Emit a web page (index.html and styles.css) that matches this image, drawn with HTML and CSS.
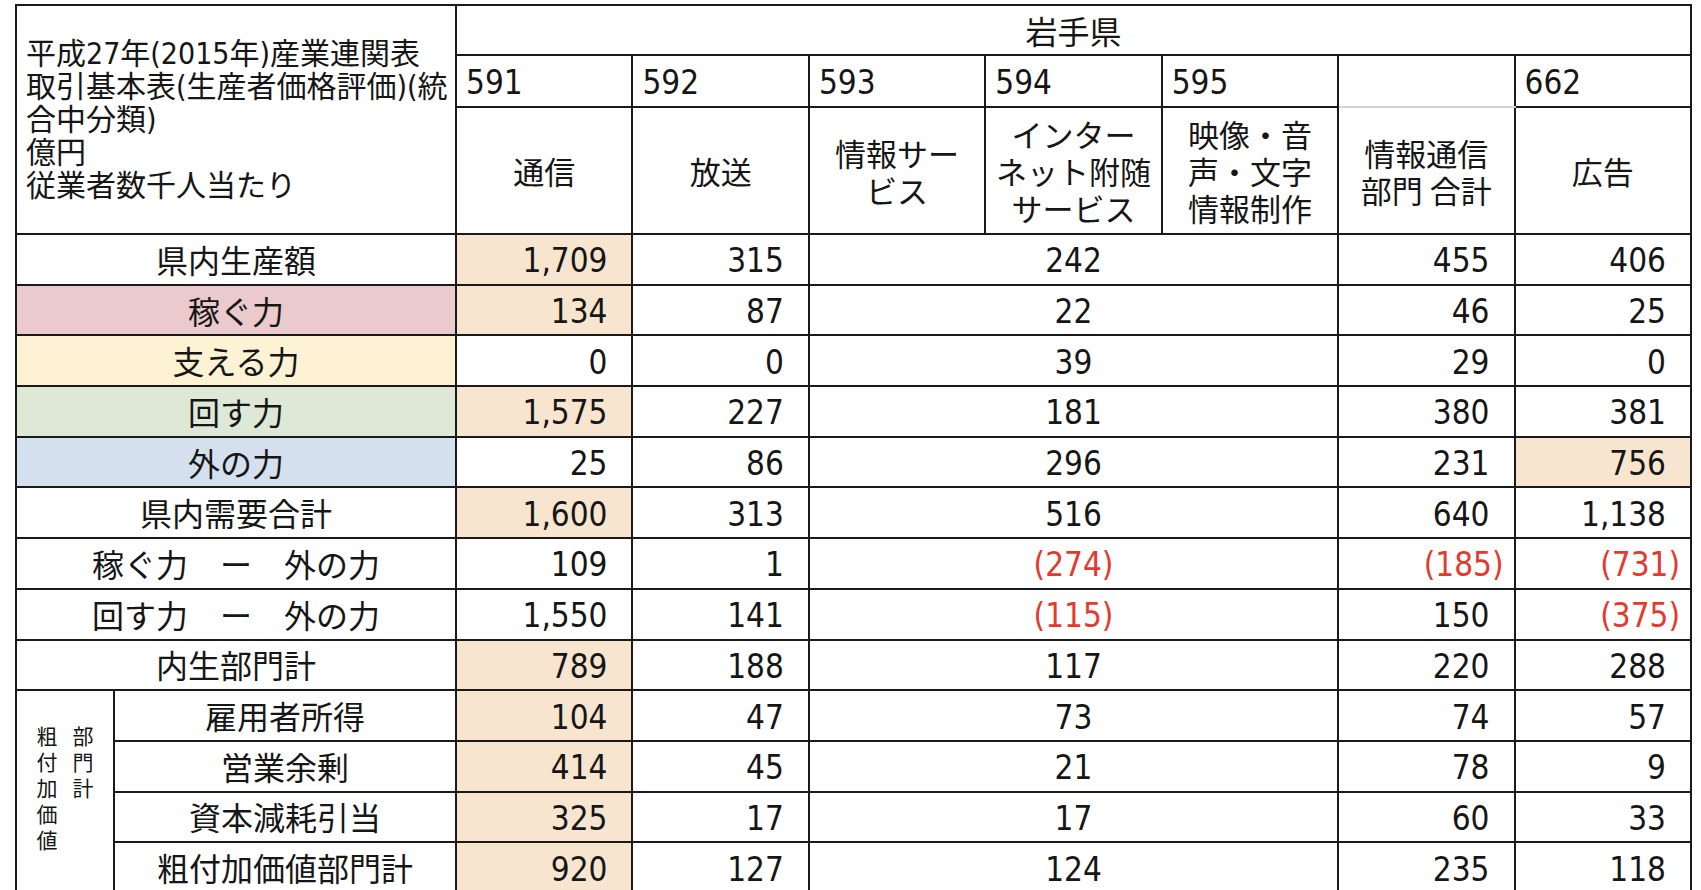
FILE: index.html
```html
<!DOCTYPE html>
<html lang="ja">
<head>
<meta charset="utf-8">
<title>岩手県 産業連関表</title>
<link rel="stylesheet" href="styles.css">
</head>
<body>
<table class="io">
<colgroup>
<col class="c-sub"><col class="c-lab"><col class="c-d"><col class="c-d"><col class="c-d"><col class="c-d"><col class="c-d"><col class="c-d"><col class="c-d">
</colgroup>
<thead>
<tr class="r-pref">
<th class="corner" colspan="2" rowspan="3">平成27年(2015年)産業連関表<br>取引基本表(生産者価格評価)(統<br>合中分類)<br>億円<br>従業者数千人当たり</th>
<th class="pref" colspan="7">岩手県</th>
</tr>
<tr class="r-code">
<th class="code">591</th>
<th class="code">592</th>
<th class="code">593</th>
<th class="code">594</th>
<th class="code">595</th>
<th class="code soft-b"></th>
<th class="code">662</th>
</tr>
<tr class="r-name">
<th class="name">通信</th>
<th class="name">放送</th>
<th class="name">情報サー<br>ビス</th>
<th class="name">インター<br>ネット附随<br>サービス</th>
<th class="name">映像・音<br>声・文字<br>情報制作</th>
<th class="name soft-t">情報通信<br>部門 合計</th>
<th class="name">広告</th>
</tr>
</thead>
<tbody>
<tr>
<th class="lab" colspan="2">県内生産額</th>
<td class="num hl">1,709</td><td class="num">315</td><td class="num mid" colspan="3">242</td><td class="num">455</td><td class="num">406</td>
</tr>
<tr>
<th class="lab pink" colspan="2">稼ぐ力</th>
<td class="num hl">134</td><td class="num">87</td><td class="num mid" colspan="3">22</td><td class="num">46</td><td class="num">25</td>
</tr>
<tr>
<th class="lab yellow" colspan="2">支える力</th>
<td class="num">0</td><td class="num">0</td><td class="num mid" colspan="3">39</td><td class="num">29</td><td class="num">0</td>
</tr>
<tr>
<th class="lab green" colspan="2">回す力</th>
<td class="num hl">1,575</td><td class="num">227</td><td class="num mid" colspan="3">181</td><td class="num">380</td><td class="num">381</td>
</tr>
<tr>
<th class="lab blue" colspan="2">外の力</th>
<td class="num">25</td><td class="num">86</td><td class="num mid" colspan="3">296</td><td class="num">231</td><td class="num hl">756</td>
</tr>
<tr>
<th class="lab" colspan="2">県内需要合計</th>
<td class="num hl">1,600</td><td class="num">313</td><td class="num mid" colspan="3">516</td><td class="num">640</td><td class="num">1,138</td>
</tr>
<tr>
<th class="lab" colspan="2">稼ぐ力　ー　外の力</th>
<td class="num">109</td><td class="num">1</td><td class="num mid neg" colspan="3">(274)</td><td class="num neg">(185)</td><td class="num neg">(731)</td>
</tr>
<tr>
<th class="lab" colspan="2">回す力　ー　外の力</th>
<td class="num">1,550</td><td class="num">141</td><td class="num mid neg" colspan="3">(115)</td><td class="num">150</td><td class="num neg">(375)</td>
</tr>
<tr>
<th class="lab" colspan="2">内生部門計</th>
<td class="num hl">789</td><td class="num">188</td><td class="num mid" colspan="3">117</td><td class="num">220</td><td class="num">288</td>
</tr>
<tr>
<th class="group" rowspan="4"><span class="vert">粗付加価値部門計</span></th>
<th class="lab">雇用者所得</th>
<td class="num hl">104</td><td class="num">47</td><td class="num mid" colspan="3">73</td><td class="num">74</td><td class="num">57</td>
</tr>
<tr>
<th class="lab">営業余剰</th>
<td class="num hl">414</td><td class="num">45</td><td class="num mid" colspan="3">21</td><td class="num">78</td><td class="num">9</td>
</tr>
<tr>
<th class="lab">資本減耗引当</th>
<td class="num hl">325</td><td class="num">17</td><td class="num mid" colspan="3">17</td><td class="num">60</td><td class="num">33</td>
</tr>
<tr>
<th class="lab">粗付加価値部門計</th>
<td class="num hl">920</td><td class="num">127</td><td class="num mid" colspan="3">124</td><td class="num">235</td><td class="num">118</td>
</tr>
</tbody>
</table>
</body>
</html>
```

FILE: styles.css
```css
html, body {
  margin: 0;
  padding: 0;
  background: #ffffff;
}

body {
  font-family: "DejaVu Sans Condensed", "Noto Sans CJK JP", sans-serif;
  color: #161616;
  overflow: hidden;
}

.io {
  border-collapse: collapse;
  table-layout: fixed;
  width: 1677px;
  margin: 4px 0 0 15px;
}

.c-sub { width: 98px; }
.c-lab { width: 342px; }
.c-d { width: 176.4px; }

.io th,
.io td {
  border: 2px solid #1a1a1a;
  padding: 0;
  font-weight: 400;
  white-space: nowrap;
}

.r-pref { height: 50px; }
.r-code { height: 52px; }
.r-name { height: 127px; }
.io tbody tr { height: 50.7px; }

.io .corner {
  text-align: left;
  vertical-align: middle;
  font-size: 30px;
  line-height: 33px;
  padding: 0 0 0 9px;
}

.io .pref {
  font-family: "Noto Sans CJK JP", sans-serif;
  font-size: 32px;
  text-align: center;
  vertical-align: middle;
}

.io .code {
  font-size: 33px;
  text-align: left;
  vertical-align: middle;
  padding: 3px 0 0 9px;
}

.io .name {
  font-family: "Noto Sans CJK JP", sans-serif;
  font-size: 31px;
  line-height: 37px;
  text-align: center;
  vertical-align: middle;
}

.io .soft-b { border-bottom: 2px solid #d6d6d6; }
.io .soft-t { border-top: 2px solid #d6d6d6; }

.io .lab {
  font-family: "Noto Sans CJK JP", sans-serif;
  font-size: 32px;
  line-height: 40px;
  text-align: center;
  vertical-align: middle;
  padding-bottom: 1px;
}

.io .pink { background: #eacacd; }
.io .yellow { background: #fdf2d3; }
.io .green { background: #dee8d6; }
.io .blue { background: #d5e0ef; }

.io .num {
  font-size: 33px;
  line-height: 40px;
  text-align: right;
  vertical-align: middle;
  padding: 4px 24px 0 0;
}

.io .neg {
  color: #e6392d;
  padding-right: 10px;
}

.io .mid {
  text-align: center;
  padding-right: 0;
}

.io .hl { background: #f8e5d0; }

.io .group {
  vertical-align: middle;
  text-align: center;
  padding-top: 4px;
}

.vert {
  display: inline-block;
  writing-mode: vertical-lr;
  white-space: normal;
  height: 132px;
  font-family: "Noto Sans CJK JP", sans-serif;
  font-size: 21px;
  line-height: 36px;
  letter-spacing: 5px;
  text-align: start;
}
```
